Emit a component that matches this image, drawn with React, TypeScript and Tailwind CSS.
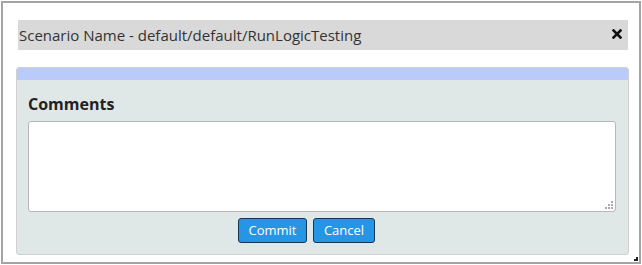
export default function App() {
  return (
    <div className="w-[642px] h-[265px] bg-white p-px" style={{ fontFamily: '"Open Sans", sans-serif' }}>
      <div className="relative h-full w-full border-2 border-[#a4a4a4] bg-white">
        <div className="ml-[15px] mt-[17px] flex h-[30px] w-[610px] items-center justify-between bg-[#d9d9d9] pl-px pr-[5px]">
          <span className="text-[15px] text-[#333]">Scenario Name - default/default/RunLogicTesting</span>
          <svg width="10" height="10" viewBox="0 0 10 10" className="mb-[2px] mr-px">
            <path d="M1.5 1.5 L8.5 8.5 M8.5 1.5 L1.5 8.5" stroke="#111" strokeWidth="2.6" strokeLinecap="square" />
          </svg>
        </div>

        <div className="ml-[13px] mt-[17px] flex h-[188px] w-[613px] flex-col overflow-hidden rounded-[3px] border border-[#d0d0d0] bg-[#dfe8e6]">
          <div className="h-[12px] bg-[#bacbfb]" />
          <div className="flex flex-1 flex-col px-[11px]">
            <h2 className="mt-[13px] text-[16px] font-bold leading-[22px] text-[#222]">Comments</h2>
            <div className="relative mt-[6px] h-[91px] w-[588px] rounded-[3px] border border-[#b8b8b8] bg-white">
              <svg width="8" height="8" viewBox="0 0 8 8" className="absolute bottom-[2px] right-[2px]">
                <rect x="6" y="0" width="2" height="2" fill="#aaa" />
                <rect x="3" y="3" width="2" height="2" fill="#aaa" />
                <rect x="6" y="3" width="2" height="2" fill="#aaa" />
                <rect x="0" y="6" width="2" height="2" fill="#aaa" />
                <rect x="3" y="6" width="2" height="2" fill="#aaa" />
                <rect x="6" y="6" width="2" height="2" fill="#aaa" />
              </svg>
            </div>
            <div className="mt-[6px] ml-[210px] flex gap-[6px]">
              <button className="h-[25px] w-[69px] rounded-[3px] border border-[#1c3553] bg-[#2596e6] text-[13px] text-white">Commit</button>
              <button className="h-[25px] w-[62px] rounded-[3px] border border-[#1c3553] bg-[#2596e6] text-[13px] text-white">Cancel</button>
            </div>
          </div>
        </div>

        <svg width="4" height="4" viewBox="0 0 4 4" className="absolute bottom-[1px] right-[1px]">
          <rect x="2" y="0" width="2" height="2" fill="#222" />
          <rect x="0" y="2" width="2" height="2" fill="#222" />
          <rect x="2" y="2" width="2" height="2" fill="#222" />
        </svg>
      </div>
    </div>
  );
}
